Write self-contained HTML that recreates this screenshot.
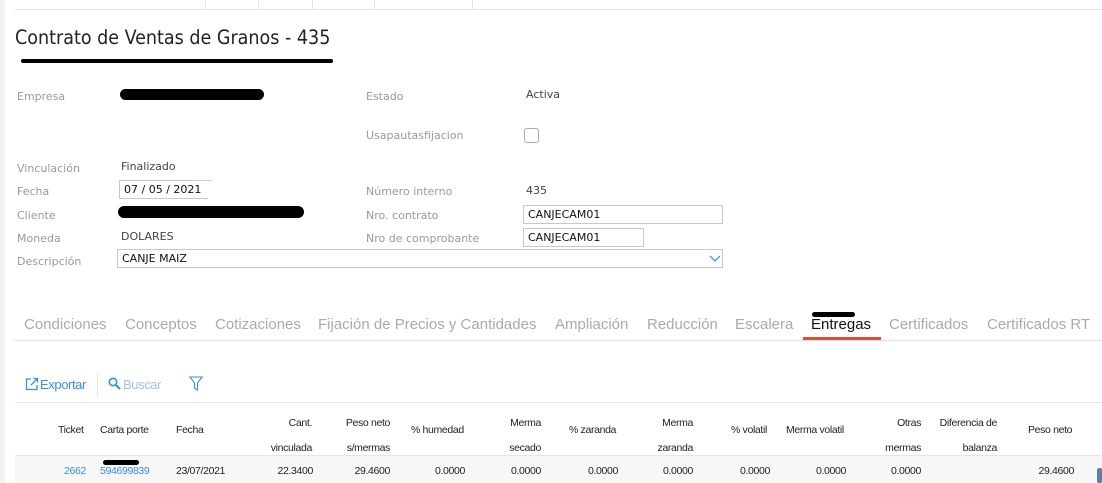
<!DOCTYPE html>
<html><head><meta charset="utf-8"><style>
*{margin:0;padding:0;box-sizing:border-box}
body{width:1102px;height:483px;background:#fff;font-family:"DejaVu Sans","Liberation Sans",sans-serif;position:relative;overflow:hidden;color:#333}
.a{position:absolute;white-space:nowrap}
.lb{font-size:11px;color:#999}
.v{font-size:11px;color:#444}
.in{position:absolute;border:1px solid #c8c8c8;font-size:11px;color:#111;padding:2px 4px;height:19px}
.tab{position:absolute;top:316px;font-family:"Liberation Sans",sans-serif;font-size:15px;color:#aaa}
.th,.td{position:absolute;font-family:"Liberation Sans Narrow","Liberation Sans",sans-serif;font-size:10.5px;letter-spacing:-0.35px;color:#222;white-space:nowrap}
.blk{position:absolute;background:#000;border-radius:6px}
</style></head><body>
<div class="a" style="left:0;top:0;width:5px;height:483px;background:#f2f2f2"></div>
<div class="a" style="left:15px;top:9px;width:1087px;height:1px;background:#e4e4e4"></div>
<div class="a" style="left:205px;top:0;width:1px;height:9px;background:#e4e4e4"></div>
<div class="a" style="left:258px;top:0;width:1px;height:9px;background:#e4e4e4"></div>
<div class="a" style="left:312px;top:0;width:1px;height:9px;background:#e4e4e4"></div>
<div class="a" style="left:374px;top:0;width:1px;height:9px;background:#e4e4e4"></div>
<div class="a" style="left:472px;top:0;width:1px;height:9px;background:#e4e4e4"></div>
<div class="a" style="left:15px;top:26px;font-family:'DejaVu Sans Condensed','DejaVu Sans',sans-serif;font-size:19.5px;color:#222;font-weight:300">Contrato de Ventas de Granos - 435</div>
<div class="blk" style="left:21px;top:59px;width:312px;height:4px"></div>

<div class="a lb" style="left:17px;top:90px">Empresa</div>
<div class="blk" style="left:120px;top:89px;width:144px;height:11px"></div>
<div class="a lb" style="left:366px;top:90px">Estado</div>
<div class="a v" style="left:526px;top:88px">Activa</div>
<div class="a lb" style="left:366px;top:129px">Usapautasfijacion</div>
<div class="a" style="left:524px;top:128px;width:15px;height:15px;border:1px solid #aaa;border-radius:3px"></div>
<div class="a lb" style="left:17px;top:162px">Vinculación</div>
<div class="a v" style="left:121px;top:160px">Finalizado</div>
<div class="a lb" style="left:17px;top:185px">Fecha</div>
<div class="in" style="left:119px;top:180px;width:89px;height:19px;border-right:none">07 / 05 / 2021</div>
<div class="a" style="left:198px;top:180px;width:14px;height:1px;background:#ccc"></div>
<div class="a lb" style="left:366px;top:185px">Número interno</div>
<div class="a v" style="left:526px;top:184px">435</div>
<div class="a lb" style="left:17px;top:209px">Cliente</div>
<div class="blk" style="left:118px;top:206px;width:186px;height:12px"></div>
<div class="a lb" style="left:366px;top:209px">Nro. contrato</div>
<div class="in" style="left:523px;top:205px;width:200px">CANJECAM01</div>
<div class="a lb" style="left:17px;top:232px">Moneda</div>
<div class="a v" style="left:121px;top:230px">DOLARES</div>
<div class="a lb" style="left:366px;top:232px">Nro de comprobante</div>
<div class="in" style="left:523px;top:228px;width:121px">CANJECAM01</div>
<div class="a lb" style="left:17px;top:255px">Descripción</div>
<div class="in" style="left:117px;top:249px;width:606px">CANJE MAIZ</div>
<svg class="a" style="left:709px;top:255px" width="12" height="8"><path d="M1 1 L6 6 L11 1" stroke="#4a90e2" fill="none" stroke-width="1.3"/></svg>

<div class="tab" style="left:24px">Condiciones</div>
<div class="tab" style="left:125px">Conceptos</div>
<div class="tab" style="left:215px">Cotizaciones</div>
<div class="tab" style="left:318px">Fijación de Precios y Cantidades</div>
<div class="tab" style="left:555px">Ampliación</div>
<div class="tab" style="left:647px">Reducción</div>
<div class="tab" style="left:735px">Escalera</div>
<div class="tab" style="left:811px;color:#111">Entregas</div>
<div class="tab" style="left:889px">Certificados</div>
<div class="tab" style="left:987px">Certificados RT</div>
<div class="blk" style="left:812px;top:312px;width:43px;height:5px"></div>
<div class="a" style="left:15px;top:340px;width:1087px;height:1px;background:#e0e0e0"></div>
<div class="a" style="left:803px;top:337px;width:78px;height:3px;background:#e04b3a"></div>

<svg class="a" style="left:25px;top:377px" width="14" height="14"><path d="M6 2H1.5v10.5H12V8" stroke="#3a8fd9" fill="none" stroke-width="1.3"/><path d="M6 8L12.5 1.5M8.5 1.5h4v4" stroke="#3a8fd9" fill="none" stroke-width="1.3"/></svg>
<div class="a" style="left:40px;top:377px;font-family:'Liberation Sans Narrow','Liberation Sans',sans-serif;font-size:13px;letter-spacing:-0.4px;color:#3a8fd9">Exportar</div>
<div class="a" style="left:97px;top:373px;width:1px;height:24px;background:#e6e6e6"></div>
<svg class="a" style="left:108px;top:377px" width="13" height="13"><circle cx="5" cy="5" r="3.7" stroke="#3a8fd9" stroke-width="1.6" fill="none"/><path d="M8 8L12 12" stroke="#3a8fd9" stroke-width="2"/></svg>
<div class="a" style="left:123px;top:377px;font-family:'Liberation Sans Narrow','Liberation Sans',sans-serif;font-size:13px;letter-spacing:-0.4px;color:#9cc4ea">Buscar</div>
<svg class="a" style="left:189px;top:376px" width="14" height="15"><path d="M1 1H13L8.5 7V14L5.5 12V7Z" stroke="#3a8fd9" fill="none" stroke-width="1.1"/></svg>
<div class="a" style="left:15px;top:402px;width:1087px;height:1px;background:#e6e6e6"></div>

<div class="th" style="left:58px;top:424px">Ticket</div>
<div class="th" style="left:100px;top:424px">Carta porte</div>
<div class="th" style="left:176px;top:424px">Fecha</div>
<div class="th" style="right:790px;top:411px;text-align:right;line-height:25px">Cant.<br>vinculada</div>
<div class="th" style="right:712px;top:411px;text-align:right;line-height:25px">Peso neto<br>s/mermas</div>
<div class="th" style="left:411px;top:424px">% humedad</div>
<div class="th" style="right:561px;top:411px;text-align:right;line-height:25px">Merma<br>secado</div>
<div class="th" style="left:569px;top:424px">% zaranda</div>
<div class="th" style="right:409px;top:411px;text-align:right;line-height:25px">Merma<br>zaranda</div>
<div class="th" style="left:731px;top:424px">% volatil</div>
<div class="th" style="left:786px;top:424px">Merma volatil</div>
<div class="th" style="right:181px;top:411px;text-align:right;line-height:25px">Otras<br>mermas</div>
<div class="th" style="right:105px;top:411px;text-align:right;line-height:25px">Diferencia de<br>balanza</div>
<div class="th" style="left:1028px;top:424px">Peso neto</div>
<div class="a" style="left:15px;top:455px;width:1087px;height:28px;background:#f7f7f7;border-top:1px solid #e6e6e6"></div>
<div class="blk" style="left:103px;top:460px;width:36px;height:5px"></div>
<div class="td" style="left:64px;top:465px;color:#3a8fd9">2662</div>
<div class="td" style="left:100px;top:465px;color:#3a8fd9">594699839</div>
<div class="td" style="left:176px;top:465px">23/07/2021</div>
<div class="td" style="right:789px;top:465px">22.3400</div>
<div class="td" style="right:712px;top:465px">29.4600</div>
<div class="td" style="right:637px;top:465px">0.0000</div>
<div class="td" style="right:561px;top:465px">0.0000</div>
<div class="td" style="right:484px;top:465px">0.0000</div>
<div class="td" style="right:409px;top:465px">0.0000</div>
<div class="td" style="right:332px;top:465px">0.0000</div>
<div class="td" style="right:256px;top:465px">0.0000</div>
<div class="td" style="right:181px;top:465px">0.0000</div>
<div class="td" style="right:28px;top:465px">29.4600</div>
<div class="a" style="left:1097px;top:468px;width:5px;height:15px;background:#5a7fa8;border-radius:2px"></div>
</body></html>
